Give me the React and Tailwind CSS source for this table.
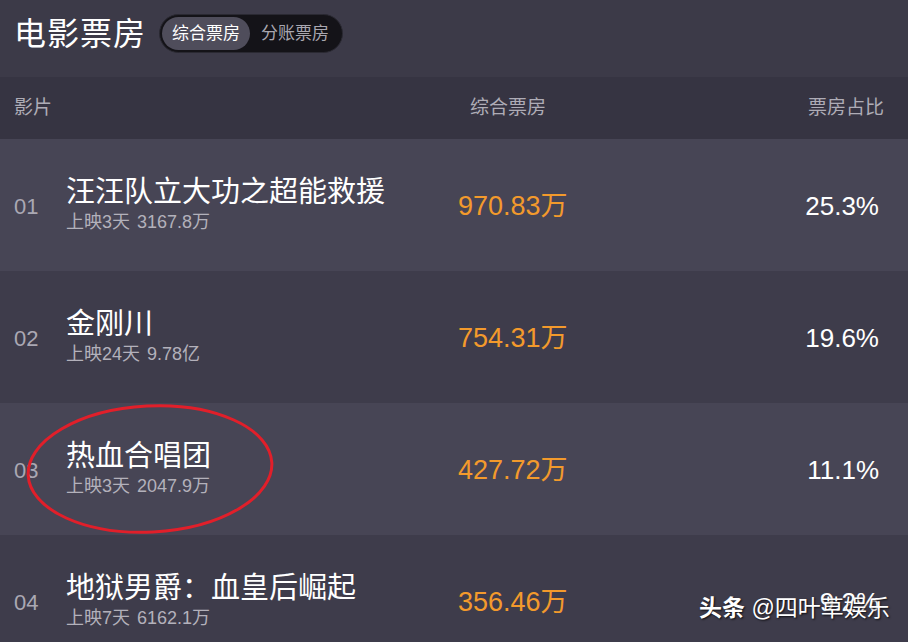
import React from 'react'

const films = [
  { no: '01', name: '汪汪队立大功之超能救援', days: '上映3天', total: '3167.8万', box: '970.83万', pct: '25.3%' },
  { no: '02', name: '金刚川', days: '上映24天', total: '9.78亿', box: '754.31万', pct: '19.6%' },
  { no: '03', name: '热血合唱团', days: '上映3天', total: '2047.9万', box: '427.72万', pct: '11.1%' },
  { no: '04', name: '地狱男爵：血皇后崛起', days: '上映7天', total: '6162.1万', box: '356.46万', pct: '9.2%' },
]

export default function App(){
  return (
    <div className="relative w-[908px] h-[642px] overflow-hidden bg-[#3c3a48] text-white" style={{ fontFamily: '"Liberation Sans", "Noto Sans CJK SC", sans-serif' }}>
      <div className="h-[77px] flex items-center pl-[14px] gap-[13px] bg-[#3c3a48]">
        <h1 className="text-[32px] leading-none font-normal tracking-[1px] -mt-[10px]">电影票房</h1>
        <div className="-mt-[10px] flex items-center h-[39px] p-[2px] rounded-full bg-[#141318] border border-[#2a2932]">
          <div className="h-full px-[10px] flex items-center rounded-full bg-[#4f4d5b] text-[17px] text-white">综合票房</div>
          <div className="h-full px-[11px] flex items-center text-[17px] text-[#a9a7b0]">分账票房</div>
        </div>
      </div>

      <div className="h-[62px] flex items-center pl-[14px] pr-[24px] bg-[#363442] text-[19px] text-[#aeacb6]">
        <div className="w-[456px]">影片</div>
        <div className="flex-1">综合票房</div>
        <div>票房占比</div>
      </div>

      {films.map((f, i) => (
        <div key={f.no} className={(i % 2 === 0 ? 'bg-[#474555]' : 'bg-[#3e3c4b]') + ' h-[132px] shrink-0 flex items-center pl-[14px] pr-[29px]'}>
          <div className="w-[52px] text-[22px] text-[#aaa8b3] pt-[2px]">{f.no}</div>
          <div className="w-[392px] flex flex-col -mt-[2px]">
            <div className="text-[29px] leading-[34px] text-white">{f.name}</div>
            <div className="text-[18px] leading-[22px] text-[#b3b1bb] flex gap-[7px] mt-[2px]">
              <span>{f.days}</span><span>{f.total}</span>
            </div>
          </div>
          <div className="flex-1 text-[27px] text-[#f39a2c] pt-[2px]">{f.box}</div>
          <div className="text-[26px] text-white pt-[2px]">{f.pct}</div>
        </div>
      ))}

      <svg className="absolute left-0 top-0 pointer-events-none" width="908" height="642">
        <ellipse cx="150" cy="469" rx="122" ry="63" fill="none" stroke="#e11f2a" strokeWidth="3" transform="rotate(-3 150 469)" />
      </svg>

      <div className="absolute left-[699px] top-[594px] text-[23px] leading-[28px] text-white [text-shadow:1px_1px_2px_rgba(0,0,0,0.8)] whitespace-nowrap">
        <span className="font-bold">头条</span> @四叶草娱乐
      </div>
    </div>
  )
}
